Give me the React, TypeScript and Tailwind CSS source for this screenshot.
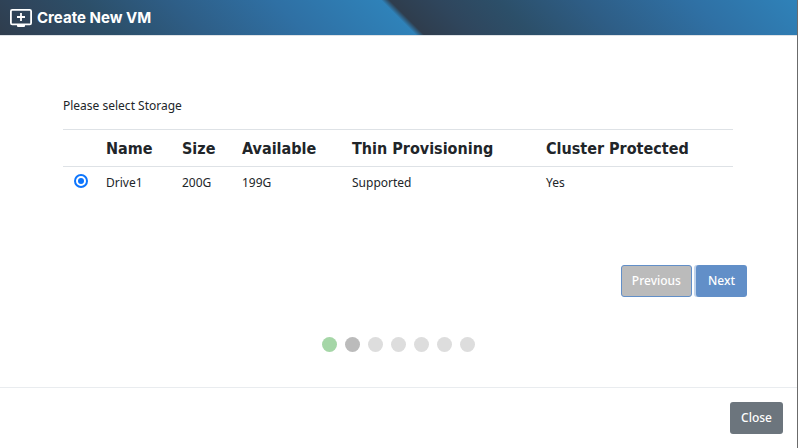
import { useState } from "react";

const drives = [
  { name: "Drive1", size: "200G", available: "199G", thin: "Supported", protectedBy: "Yes" },
];

const steps = [
  "bg-[#a5d6a7]",
  "bg-[#bbbbbb]",
  "bg-[#dddddd]",
  "bg-[#dddddd]",
  "bg-[#dddddd]",
  "bg-[#dddddd]",
  "bg-[#dddddd]",
];

function MonitorPlusIcon() {
  return (
    <svg width="22" height="18" viewBox="0 0 22 18" fill="none" aria-hidden="true">
      <rect x="0.9" y="0.9" width="20.2" height="14.4" rx="1.4" stroke="#fff" strokeWidth="1.8" />
      <path d="M11 4v8M7 8h8" stroke="#fff" strokeWidth="1.8" />
      <path d="M7 15h8v2q0 1-1 1H8q-1 0-1-1z" fill="#fff" />
    </svg>
  );
}

export default function App() {
  const [selected, setSelected] = useState("Drive1");

  return (
    <div className="flex min-h-screen flex-col border-r border-[#6b6b6b] bg-white font-['Noto_Sans',sans-serif] text-xs text-[#212529]">
      {/* Title bar */}
      <header className="flex h-9 items-center gap-1 border-b border-[#dee2e6] bg-[linear-gradient(45deg,#2f3d4d_0%,#2f465d_7%,#2c4f69_14%,#2e5d85_24%,#2f70a4_37%,#2f82b9_50%,#2f3d4d_51%,#2f465d_57%,#2c4f69_64%,#2e5d85_74%,#2f70a4_87%,#2f82b9_100%)] px-[10px]">
        <MonitorPlusIcon />
        <h1 className="pl-px font-['Inter',sans-serif] text-[15px] leading-5 font-bold text-white">
          Create New VM
        </h1>
      </header>

      {/* Storage step */}
      <main className="flex-1 pt-[60px] pr-[50px] pl-[63px]">
        <p className="leading-5">Please select Storage</p>
        <div className="pt-[13px] pr-[14px]">
          <table className="w-full table-fixed border-t border-[#dee2e6] text-left">
            <colgroup>
              <col className="w-[31px]" />
              <col className="w-[76px]" />
              <col className="w-[60px]" />
              <col className="w-[110px]" />
              <col className="w-[194px]" />
              <col />
            </colgroup>
            <thead>
              <tr className="h-[37px] border-b border-[#dee2e6] font-['DejaVu_Sans_Condensed',sans-serif] text-base font-bold whitespace-nowrap">
                <th></th>
                <th className="pt-px pl-3">Name</th>
                <th className="pt-px pl-3">Size</th>
                <th className="pt-px pl-3">Available</th>
                <th className="pt-px pl-3">Thin Provisioning</th>
                <th className="pt-px pl-3">Cluster Protected</th>
              </tr>
            </thead>
            <tbody>
              {drives.map((drive) => (
                <tr key={drive.name} className="h-8">
                  <td className="pb-1 pl-[11px]">
                    <input
                      type="radio"
                      name="drive"
                      aria-label={drive.name}
                      checked={selected === drive.name}
                      onChange={() => setSelected(drive.name)}
                      className="block size-[14px] appearance-none rounded-full border-2 border-[#0d75fd] bg-white bg-clip-content p-0.5 checked:bg-[#0d75fd]"
                    />
                  </td>
                  <td className="pl-3">{drive.name}</td>
                  <td className="pl-3">{drive.size}</td>
                  <td className="pl-3">{drive.available}</td>
                  <td className="pl-3">{drive.thin}</td>
                  <td className="pl-3">{drive.protectedBy}</td>
                </tr>
              ))}
            </tbody>
          </table>
        </div>

        <div className="mt-[66px] flex justify-end gap-1 font-medium text-white">
          <button className="h-8 rounded-[3px] border border-[#628fc8] bg-[#bbbbbb] px-[10px]">
            Previous
          </button>
          <button className="h-8 rounded-[3px] bg-[#628fc8] px-3 shadow-[-2px_0_0_#c1d3ea]">
            Next
          </button>
        </div>
      </main>

      {/* Step indicator */}
      <div className="flex justify-center gap-2 pb-[35px]">
        {steps.map((color, i) => (
          <span key={i} className={`size-[15px] rounded-full ${color}`} />
        ))}
      </div>

      <footer className="flex justify-end border-t border-[#e9ecef] px-[14px] py-[14px]">
        <button className="h-8 rounded-[3px] bg-[#6c757d] px-[11px] font-medium text-white">
          Close
        </button>
      </footer>
    </div>
  );
}
